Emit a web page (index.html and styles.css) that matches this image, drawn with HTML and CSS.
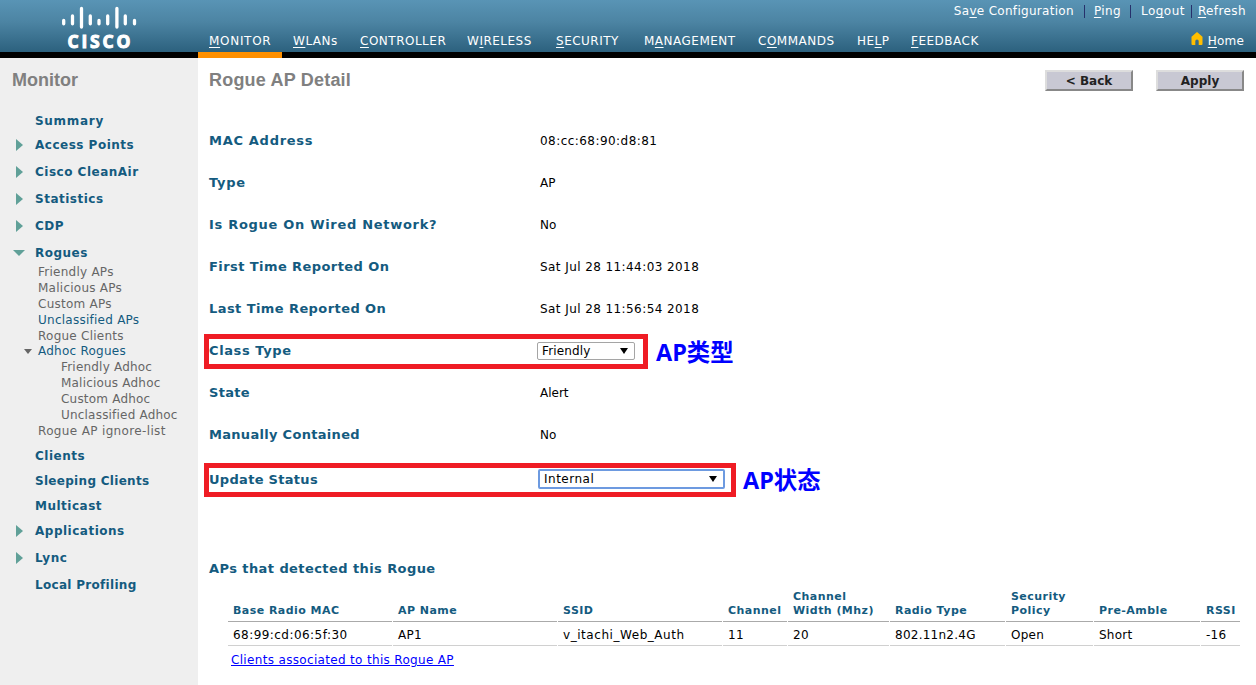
FILE: index.html
```html
<!DOCTYPE html>
<html lang="en">
<head>
<meta charset="utf-8">
<title>Rogue AP Detail</title>
<link rel="stylesheet" href="styles.css">
</head>
<body>
<header class="top">
  <div class="brand">
    <svg width="90" height="52" viewBox="55 0 90 52">
      <g stroke="#fff" stroke-width="3.300" stroke-linecap="round">
        <path d="M63.700 20.500v3.300M72.500 16v7.800M81.500 8.500v18.500M90.300 16v7.800M99 20.500v3.300M107.700 16v7.800M116.900 8.500v18.500M125.300 16v7.800M134.500 20.500v3.300"/>
      </g>
      <text class="logo-text" x="67.500" y="47.800">CISCO</text>
    </svg>
  </div>
  <div class="head-main">
    <div class="tools"><a class="t-save">Sa<u>v</u>e Configuration</a><i></i><a class="t-ping"><u>P</u>ing</a><i></i><a class="t-log">Lo<u>g</u>out</a><i></i><a class="t-ref"><u>R</u>efresh</a></div>
    <div class="navrow">
      <nav class="nav"><a class="active"><u>M</u>ONITOR</a><a><u>W</u>LANs</a><a><u>C</u>ONTROLLER</a><a>W<u>I</u>RELESS</a><a><u>S</u>ECURITY</a><a>M<u>A</u>NAGEMENT</a><a>C<u>O</u>MMANDS</a><a>HE<u>L</u>P</a><a><u>F</u>EEDBACK</a></nav>
      <a class="home"><svg width="12" height="13" viewBox="0 0 12 13"><path d="M.5 12V4.800L6 0L11.500 4.800V12Q11.500 13 10.500 13H7.700V9Q7.700 7.500 6 7.500T4.300 9V13H1.500Q.5 13 .5 12Z" fill="#ffbf00"/></svg><span><u>H</u>ome</span></a>
    </div>
  </div>
</header>
<div class="body">
  <aside class="side">
    <h2>Monitor</h2>
    <ul class="menu">
      <li class="first">Summary</li>
      <li class="arrow">Access Points</li>
      <li class="arrow">Cisco CleanAir</li>
      <li class="arrow">Statistics</li>
      <li class="arrow">CDP</li>
      <li class="open">Rogues</li>
    </ul>
    <ul class="sub">
      <li>Friendly APs</li><li>Malicious APs</li><li>Custom APs</li><li class="hl">Unclassified APs</li><li>Rogue Clients</li>
      <li class="hl adhoc">Adhoc Rogues</li>
      <li class="deep">Friendly Adhoc</li><li class="deep">Malicious Adhoc</li><li class="deep">Custom Adhoc</li><li class="deep">Unclassified Adhoc</li>
      <li class="ignore">Rogue AP ignore-list</li>
    </ul>
    <ul class="menu lower">
      <li>Clients</li><li class="tight">Sleeping Clients</li><li>Multicast</li>
      <li class="arrow">Applications</li><li class="arrow">Lync</li><li class="last">Local Profiling</li>
    </ul>
  </aside>
  <main class="main">
    <div class="title"><h1>Rogue AP Detail</h1><div class="btns"><button>&lt; Back</button><button>Apply</button></div></div>
    <dl class="fields">
      <div><dt class="wide">MAC Address</dt><dd class="mac">08:cc:68:90:d8:81</dd></div>
      <div><dt class="wide">Type</dt><dd>AP</dd></div>
      <div><dt class="wide">Is Rogue On Wired Network?</dt><dd>No</dd></div>
      <div><dt>First Time Reported On</dt><dd class="date">Sat Jul 28 11:44:03 2018</dd></div>
      <div><dt>Last Time Reported On</dt><dd class="date">Sat Jul 28 11:56:54 2018</dd></div>
    </dl>
    <div class="mark"><div class="frame f1"><span class="lbl wide">Class Type</span><span class="select s1">Friendly<b></b></span></div><strong>AP类型</strong></div>
    <dl class="fields mid">
      <div><dt class="tight">State</dt><dd>Alert</dd></div>
      <div><dt class="tight">Manually Contained</dt><dd>No</dd></div>
    </dl>
    <div class="mark m2"><div class="frame f2"><span class="lbl tight">Update Status</span><span class="select s2">Internal<b></b></span></div><strong>AP状态</strong></div>
    <h3>APs that detected this Rogue</h3>
    <div class="grid">
      <div class="th">Base Radio MAC</div><div class="th">AP Name</div><div class="th">SSID</div><div class="th">Channel</div><div class="th">Channel<br>Width (Mhz)</div><div class="th">Radio Type</div><div class="th">Security<br>Policy</div><div class="th">Pre-Amble</div><div class="th">RSSI</div>
      <div class="td mac">68:99:cd:06:5f:30</div><div class="td">AP1</div><div class="td ssid">v_itachi_Web_Auth</div><div class="td">11</div><div class="td">20</div><div class="td">802.11n2.4G</div><div class="td">Open</div><div class="td">Short</div><div class="td">-16</div>
    </div>
    <a class="link">Clients associated to this Rogue AP</a>
  </main>
</div>
</body>
</html>
```
FILE: styles.css
```css
* { box-sizing: border-box; }
body { margin: 0; width: 1256px; height: 685px; overflow: hidden; background: #fff; color: #000; font: 12px/16px "DejaVu Sans", sans-serif; }
ul, dl, dd, h1, h2, h3 { margin: 0; padding: 0; list-style: none; }
u { text-decoration: underline; text-underline-offset: 2px; text-decoration-thickness: 1px; }
.top { display: flex; height: 58px; background: linear-gradient(#5994b5 0, #4c84a3 22px, #2c617e 52px, #000 52px); color: #fff; }
.brand { width: 198px; padding-left: 55px; }
.brand svg { display: block; }
.logo-text { font: bold 17.5px "Open Sans", sans-serif; letter-spacing: 2.8px; fill: #fff; stroke: #fff; stroke-width: 1px; }
.head-main { width: 1058px; }
.tools { display: flex; justify-content: flex-end; align-items: center; height: 22px; padding-right: 10px; letter-spacing: .25px; }
.tools i { width: 1px; height: 13px; background: #26306b; }
.t-save { margin-right: 10px; }
.t-ping { margin: 0 9px 0 9px; letter-spacing: .4px; }
.t-log { margin: 0 6px 0 10px; letter-spacing: .45px; }
.t-save { letter-spacing: .3px; }
.t-ref { margin-left: 6px; letter-spacing: .4px; }
.navrow { display: flex; justify-content: space-between; height: 36px; }
.nav { display: grid; grid-template-columns: 84px 67px 107px 89px 88px 114px 99px 54px 90px; line-height: 18px; letter-spacing: .5px; }
.nav a { padding: 10px 0 0 11px; white-space: nowrap; }
.nav .active { border-bottom: 6px solid #ff9000; letter-spacing: .7px; }
.home { display: flex; align-items: flex-start; gap: 5px; padding: 10px 12px 0 0; line-height: 18px; letter-spacing: .2px; }
.body { display: flex; height: 627px; }
.side { width: 198px; background: #efefef; color: #666; }
h1, h2 { font: bold 18px/22px "Liberation Sans", Arial, sans-serif; color: #808080; }
h1 { letter-spacing: .2px; }
h2 { padding: 11px 0 0 12px; height: 50px; }
.menu { color: #145b7f; font-weight: bold; letter-spacing: .5px; }
.menu li { position: relative; height: 25px; line-height: 27px; padding-left: 35px; }
.menu .first { height: 24px; line-height: 26px; letter-spacing: .7px; }
.menu .arrow { height: 27px; line-height: 27px; }
.menu .open { height: 23px; line-height: 27px; }
.menu .last { line-height: 27px; letter-spacing: .3px; }
.arrow::before, .open::before, .adhoc::before { content: ""; position: absolute; }
.arrow::before { left: 16px; top: 7px; border: 6px solid transparent; border-left: 7px solid #60a098; border-right: 0; }
.open::before { left: 13px; top: 10px; border: 6px solid transparent; border-top: 6px solid #60a098; border-bottom: 0; }
.lower { margin-top: 4px; }
.sub { letter-spacing: .25px; }
.sub li { position: relative; height: 16px; line-height: 18px; padding-left: 38px; }
.sub .hl { color: #145b7f; }
.sub .adhoc { height: 15px; line-height: 16px; }
.adhoc::before { left: 24px; top: 6px; border: 4px solid transparent; border-top: 5px solid #666; border-bottom: 0; }
.sub .deep { padding-left: 61px; letter-spacing: .2px; }
.sub .ignore { height: 17px; line-height: 19px; letter-spacing: .35px; }
.main { width: 1058px; padding-left: 6px; }
.title { display: flex; justify-content: space-between; height: 62px; padding: 11px 12px 0 5px; }
.btns { display: flex; gap: 23px; }
button { width: 88px; height: 21px; margin-top: 1px; padding: 0; border: 2px solid; border-color: #ddd #888 #888 #ddd; background: #c8c8d3; color: #222; font: bold 12px/16px "DejaVu Sans", sans-serif; }
.fields { padding-left: 5px; }
.fields > div { display: flex; height: 42px; align-items: center; }
dt, .lbl, h3 { color: #145b7f; font-weight: bold; font-size: 13px; letter-spacing: .42px; }
.wide { letter-spacing: .7px; }
.tight { letter-spacing: .3px; }
dt { width: 331px; }
.mac { letter-spacing: .45px; }
.date { letter-spacing: .42px; }
.mark { display: flex; height: 35px; margin-top: 4px; }
.mark strong { color: #00f; font: bold 23.4px/36px "Open Sans", "Noto Sans CJK SC", sans-serif; padding-left: 8px; }
.frame { display: flex; align-items: center; border: 5px solid #ef1c24; }
.frame .lbl { width: 328px; line-height: 16px; margin-top: -1px; }
.f1 { width: 444px; }
.f2 { width: 532px; }
.f1 .lbl { letter-spacing: .6px; }
.f2 .lbl { width: 329px; }
.mid { margin-top: 3px; }
.m2 { height: 34px; margin-top: 7px; }
.m2 strong { line-height: 35px; padding-left: 7px; }
.select { display: flex; justify-content: space-between; align-items: center; border: 1px solid #a5a5a5; border-radius: 2px; height: 18px; margin-top: -1px; padding: 0 6px 0 4px; letter-spacing: .15px; }
.select b { border: 4px solid transparent; border-top: 6px solid #000; border-bottom: 0; }
.s1 { width: 98px; }
.s2 { width: 187px; height: 20px; margin-top: -2px; border: 2px solid #6d9ae0; letter-spacing: .5px; }
h3 { line-height: 18px; padding-left: 5px; margin-top: 63px; }
.grid { display: grid; grid-template-columns: 164px 164px 164px 64px 101px 115px 87px 106px 39px; grid-template-rows: 44px 24px; column-gap: 1px; margin-left: 24px; }
.th { display: flex; align-items: flex-end; padding: 0 0 3px 5px; font: bold 11px/14px "DejaVu Sans", sans-serif; letter-spacing: .45px; color: #145b7f; border-bottom: 1px solid #aaa; white-space: nowrap; }
.td { padding: 5px 0 0 5px; line-height: 17px; border-bottom: 1px solid #d0d0d0; white-space: nowrap; }
.td:not(.mac):not(.ssid) { letter-spacing: .25px; }
.td.ssid { letter-spacing: .55px; }
.link { display: inline-block; margin: 6px 0 0 27px; color: #00f; letter-spacing: .33px; text-decoration: underline; }
```
